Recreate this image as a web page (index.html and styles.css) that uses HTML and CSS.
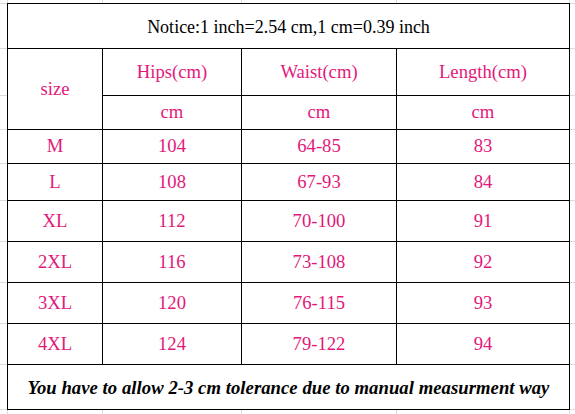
FILE: index.html
```html
<!DOCTYPE html>
<html>
<head>
<meta charset="utf-8">
<link rel="stylesheet" href="styles.css">
</head>
<body>
<div class="sheet">
  <div class="m"></div><div class="m"></div><div class="m"></div><div class="m"></div><div class="m"></div><div class="m"></div>

  <div class="m"></div>
  <div class="c notice">Notice:1 inch=2.54 cm,1 cm=0.39 inch</div>
  <div class="m"></div>

  <div class="m"></div>
  <div class="c p size">size</div>
  <div class="c p">Hips(cm)</div>
  <div class="c p">Waist(cm)</div>
  <div class="c p">Length(cm)</div>
  <div class="m"></div>

  <div class="m"></div>
  <div class="c p">cm</div>
  <div class="c p">cm</div>
  <div class="c p">cm</div>
  <div class="m"></div>

  <div class="m"></div>
  <div class="c p">M</div><div class="c p">104</div><div class="c p">64-85</div><div class="c p">83</div>
  <div class="m"></div>

  <div class="m"></div>
  <div class="c p">L</div><div class="c p">108</div><div class="c p">67-93</div><div class="c p">84</div>
  <div class="m"></div>

  <div class="m"></div>
  <div class="c p">XL</div><div class="c p">112</div><div class="c p">70-100</div><div class="c p">91</div>
  <div class="m"></div>

  <div class="m"></div>
  <div class="c p">2XL</div><div class="c p">116</div><div class="c p">73-108</div><div class="c p">92</div>
  <div class="m"></div>

  <div class="m"></div>
  <div class="c p">3XL</div><div class="c p">120</div><div class="c p">76-115</div><div class="c p">93</div>
  <div class="m"></div>

  <div class="m"></div>
  <div class="c p">4XL</div><div class="c p">124</div><div class="c p">79-122</div><div class="c p">94</div>
  <div class="m"></div>

  <div class="m"></div>
  <div class="c footer">You have to allow 2-3 cm tolerance due to manual measurment way</div>
  <div class="m"></div>

  <div class="m"></div><div class="m"></div><div class="m"></div><div class="m"></div><div class="m"></div><div class="m"></div>
</div>
</body>
</html>
```
FILE: styles.css
```css
html, body {
  margin: 0;
  padding: 0;
  background: #ffffff;
}

.sheet {
  display: grid;
  width: 575px;
  height: 414px;
  grid-template-columns: 7px 94px 138px 154px 172px 5px;
  grid-template-rows: 3px 44px 46px 33px 33px 36px 40px 40px 40px 40px 44px 4px;
  gap: 1px;
  background: #dcdcdc;
  font-family: "Liberation Serif", "Times New Roman", serif;
  overflow: hidden;
}

.m {
  background: #ffffff;
}

.c {
  background: #ffffff;
  outline: 1px solid #000000;
  display: flex;
  align-items: center;
  justify-content: center;
  font-size: 18.67px;
  line-height: 1;
  white-space: nowrap;
}

.p {
  color: #e3187a;
}

.notice {
  grid-column: 2 / 6;
  color: #000000;
  font-size: 18px;
  padding-top: 2px;
}

.size {
  grid-column: 2;
  grid-row: 3 / 5;
}

.footer {
  grid-column: 2 / 6;
  color: #000000;
  font-weight: bold;
  font-style: italic;
  font-size: 18.67px;
  letter-spacing: 0.05px;
  padding-top: 2px;
}
```
